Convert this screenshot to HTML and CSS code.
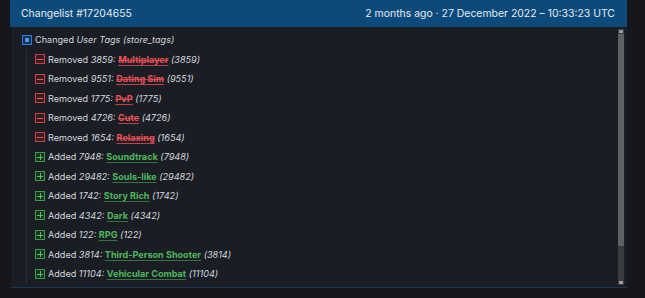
FILE: index.html
```html
<!DOCTYPE html>
<html>
<head>
<meta charset="utf-8">
<link rel="stylesheet" href="styles.css">
</head>
<body>
<div class="card">
  <div class="card-header">
    <span class="title">Changelist #17204655</span>
    <span class="date">2 months ago · 27 December 2022 – 10:33:23 UTC</span>
  </div>
  <div class="card-body">
    <div class="tree">
      <div class="row">
        <svg class="ico" width="10" height="10" viewBox="0 0 10 10"><rect x="0.5" y="0.5" width="9" height="9" fill="#12304f" stroke="#2f7fd0"/><rect x="3" y="3" width="4" height="4" fill="#4a97e6"/></svg>
        <span class="txt">Changed <i>User Tags (store_tags)</i></span>
      </div>
      <div class="children">
        <div class="row"><svg class="ico" width="10" height="10" viewBox="0 0 10 10"><rect x="0.5" y="0.5" width="9" height="9" fill="#3a1c20" stroke="#c9434a"/><rect x="2" y="4.5" width="6" height="1" fill="#ee5a61"/></svg><span class="txt">Removed <i>3859:</i> <b class="rem">Multiplayer</b> <i>(3859)</i></span></div>
        <div class="row"><svg class="ico" width="10" height="10" viewBox="0 0 10 10"><rect x="0.5" y="0.5" width="9" height="9" fill="#3a1c20" stroke="#c9434a"/><rect x="2" y="4.5" width="6" height="1" fill="#ee5a61"/></svg><span class="txt">Removed <i>9551:</i> <b class="rem">Dating Sim</b> <i>(9551)</i></span></div>
        <div class="row"><svg class="ico" width="10" height="10" viewBox="0 0 10 10"><rect x="0.5" y="0.5" width="9" height="9" fill="#3a1c20" stroke="#c9434a"/><rect x="2" y="4.5" width="6" height="1" fill="#ee5a61"/></svg><span class="txt">Removed <i>1775:</i> <b class="rem">PvP</b> <i>(1775)</i></span></div>
        <div class="row"><svg class="ico" width="10" height="10" viewBox="0 0 10 10"><rect x="0.5" y="0.5" width="9" height="9" fill="#3a1c20" stroke="#c9434a"/><rect x="2" y="4.5" width="6" height="1" fill="#ee5a61"/></svg><span class="txt">Removed <i>4726:</i> <b class="rem">Cute</b> <i>(4726)</i></span></div>
        <div class="row"><svg class="ico" width="10" height="10" viewBox="0 0 10 10"><rect x="0.5" y="0.5" width="9" height="9" fill="#3a1c20" stroke="#c9434a"/><rect x="2" y="4.5" width="6" height="1" fill="#ee5a61"/></svg><span class="txt">Removed <i>1654:</i> <b class="rem">Relaxing</b> <i>(1654)</i></span></div>
        <div class="row"><svg class="ico" width="10" height="10" viewBox="0 0 10 10"><rect x="0.5" y="0.5" width="9" height="9" fill="#17321d" stroke="#3b9a4a"/><rect x="2" y="4.5" width="6" height="1" fill="#55c065"/><rect x="4.5" y="2" width="1" height="6" fill="#55c065"/></svg><span class="txt">Added <i>7948:</i> <b class="add">Soundtrack</b> <i>(7948)</i></span></div>
        <div class="row"><svg class="ico" width="10" height="10" viewBox="0 0 10 10"><rect x="0.5" y="0.5" width="9" height="9" fill="#17321d" stroke="#3b9a4a"/><rect x="2" y="4.5" width="6" height="1" fill="#55c065"/><rect x="4.5" y="2" width="1" height="6" fill="#55c065"/></svg><span class="txt">Added <i>29482:</i> <b class="add">Souls-like</b> <i>(29482)</i></span></div>
        <div class="row"><svg class="ico" width="10" height="10" viewBox="0 0 10 10"><rect x="0.5" y="0.5" width="9" height="9" fill="#17321d" stroke="#3b9a4a"/><rect x="2" y="4.5" width="6" height="1" fill="#55c065"/><rect x="4.5" y="2" width="1" height="6" fill="#55c065"/></svg><span class="txt">Added <i>1742:</i> <b class="add">Story Rich</b> <i>(1742)</i></span></div>
        <div class="row"><svg class="ico" width="10" height="10" viewBox="0 0 10 10"><rect x="0.5" y="0.5" width="9" height="9" fill="#17321d" stroke="#3b9a4a"/><rect x="2" y="4.5" width="6" height="1" fill="#55c065"/><rect x="4.5" y="2" width="1" height="6" fill="#55c065"/></svg><span class="txt">Added <i>4342:</i> <b class="add">Dark</b> <i>(4342)</i></span></div>
        <div class="row"><svg class="ico" width="10" height="10" viewBox="0 0 10 10"><rect x="0.5" y="0.5" width="9" height="9" fill="#17321d" stroke="#3b9a4a"/><rect x="2" y="4.5" width="6" height="1" fill="#55c065"/><rect x="4.5" y="2" width="1" height="6" fill="#55c065"/></svg><span class="txt">Added <i>122:</i> <b class="add">RPG</b> <i>(122)</i></span></div>
        <div class="row"><svg class="ico" width="10" height="10" viewBox="0 0 10 10"><rect x="0.5" y="0.5" width="9" height="9" fill="#17321d" stroke="#3b9a4a"/><rect x="2" y="4.5" width="6" height="1" fill="#55c065"/><rect x="4.5" y="2" width="1" height="6" fill="#55c065"/></svg><span class="txt">Added <i>3814:</i> <b class="add">Third-Person Shooter</b> <i>(3814)</i></span></div>
        <div class="row"><svg class="ico" width="10" height="10" viewBox="0 0 10 10"><rect x="0.5" y="0.5" width="9" height="9" fill="#17321d" stroke="#3b9a4a"/><rect x="2" y="4.5" width="6" height="1" fill="#55c065"/><rect x="4.5" y="2" width="1" height="6" fill="#55c065"/></svg><span class="txt">Added <i>11104:</i> <b class="add">Vehicular Combat</b> <i>(11104)</i></span></div>
      </div>
    </div>
    <div class="scrollbar">
      <span class="arrow"></span>
      <span class="thumb"></span>
      <span class="track"></span>
      <span class="arrow"></span>
    </div>
  </div>
</div>
</body>
</html>
```

FILE: styles.css
```css
html, body {
  margin: 0;
  padding: 0;
  background: #15171c;
  font-family: Inter, "Noto Sans", sans-serif;
  color: #d3d7dd;
}
.card {
  margin-left: 10px;
  width: 617px;
}
.card-header {
  height: 27px;
  background: #0c4a7b;
  display: flex;
  align-items: center;
  justify-content: space-between;
  padding: 0 12px 0 11px;
  color: #e3ebf3;
  font-size: 10.45px;
}
.card-body {
  height: 260px;
  background: #1a1d23;
  border-left: 1px solid #111318;
  border-bottom: 1px solid #1d3550;
  display: flex;
}
.tree {
  flex: 1;
  padding: 3px 0 0 11px;
  font-size: 9.1px;
  overflow: hidden;
}
.row {
  height: 19.5px;
  display: flex;
  align-items: center;
  gap: 3px;
  white-space: nowrap;
}
.children {
  margin-left: 4px;
  border-left: 1px solid #2a2e36;
  padding-left: 8px;
}
.ico {
  flex: none;
  display: block;
  shape-rendering: crispEdges;
}
.txt i { font-style: italic; color: #d3d7dd; }
.rem {
  color: #ec5158;
  font-weight: 700;
  text-decoration: underline line-through;
  text-decoration-color: rgba(236, 81, 88, 0.75);
  text-underline-offset: 2px;
}
.add {
  color: #4cb85c;
  font-weight: 700;
  text-decoration: underline;
  text-decoration-color: rgba(76, 184, 92, 0.55);
  text-underline-offset: 2px;
}
.scrollbar {
  width: 6px;
  margin: 2px 3px 2px 0;
  display: flex;
  flex-direction: column;
  background: #3a3b3e;
}
.arrow {
  height: 3px;
  margin: 1px;
  background: #9a9a9a;
}
.thumb {
  height: 212px;
  background: #5f6063;
}
.track { flex: 1; }
```
